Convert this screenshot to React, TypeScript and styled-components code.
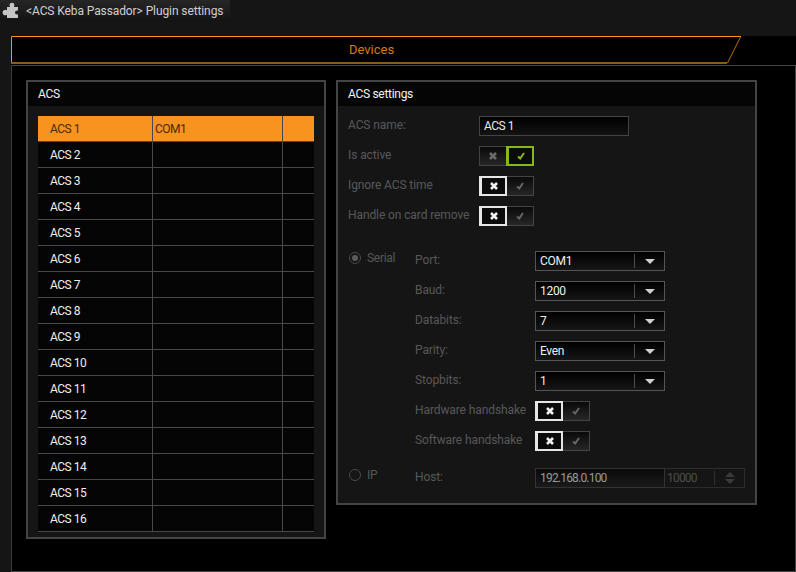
import React from 'react';
import styled, { createGlobalStyle } from 'styled-components';

const GlobalStyle = createGlobalStyle`
  html, body {
    margin: 0;
    padding: 0;
    background: #151515;
  }
  body {
    width: 796px;
    height: 572px;
    overflow: hidden;
    font-family: Roboto, "Open Sans", "Liberation Sans", sans-serif;
    font-size: 12px;
  }
`;

const Page = styled.div`
  width: 796px;
  height: 572px;
  display: flex;
  flex-direction: column;
  background: #151515;
`;

const TitleBar = styled.div`
  height: 36px;
  flex: none;
`;

const TitleTab = styled.div`
  width: 230px;
  height: 21px;
  display: flex;
  align-items: center;
  gap: 7px;
  padding-left: 2px;
  box-sizing: border-box;
  background: linear-gradient(#262626, #131313);
  color: #cfcfcf;
  letter-spacing: -0.1px;
`;

const Main = styled.div`
  flex: 1;
  margin-left: 11px;
  background: #000;
  display: flex;
  flex-direction: column;
`;

const DeviceTab = styled.div`
  position: relative;
  width: 731px;
  height: 28px;
  flex: none;
  box-sizing: border-box;
  padding: 0 10px 2px 0;
  display: flex;
  align-items: center;
  justify-content: center;
  color: #d47c14;
  font-size: 13px;
  margin-bottom: 1px;
`;

const TabShape = styled.svg`
  position: absolute;
  left: 0;
  top: 0;
`;

const Content = styled.div`
  flex: 1;
  border: 1px solid #444;
  border-left-color: #3c3c3c;
  padding: 14px;
  padding-right: 0;
  display: flex;
  gap: 10px;
  align-items: flex-start;
`;

const GroupBox = styled.section<{ $width: number }>`
  width: ${({ $width }) => $width}px;
  box-sizing: border-box;
  border: 2px solid #444;
  background: #151515;
`;

const GroupHeader = styled.h2`
  margin: 0;
  height: 24px;
  display: flex;
  align-items: center;
  padding: 0 0 1px 10px;
  box-sizing: border-box;
  background: #050505;
  color: #f2f2f2;
  font-size: 12px;
  font-weight: 400;
  letter-spacing: -0.3px;
`;

const ListBody = styled.div`
  padding: 10px 10px 5px;
`;

const Row = styled.div<{ $selected?: boolean }>`
  display: grid;
  grid-template-columns: 114px 130px 32px;
  height: 26px;
  box-sizing: border-box;
  background: ${({ $selected }) => ($selected ? '#f7931e' : '#050505')};
  color: ${({ $selected }) => ($selected ? '#4a2a08' : '#eee')};
  border-bottom: 1px solid #484848;
  letter-spacing: -0.5px;
`;

const Cell = styled.div<{ $pad: number; $line?: boolean }>`
  display: flex;
  align-items: center;
  padding-left: ${({ $pad }) => $pad}px;
  border-left: ${({ $line }) => ($line ? '1px solid #484848' : '0')};
`;

const SettingsBody = styled.div`
  padding: 10px 10px 15px;
  display: flex;
  flex-direction: column;
`;

const TopGrid = styled.div`
  display: grid;
  grid-template-columns: 131px 1fr;
  grid-auto-rows: 20px;
  row-gap: 10px;
  align-items: center;
`;

const Label = styled.label`
  color: #585858;
  white-space: nowrap;
  margin-top: -2px;
  letter-spacing: -0.1px;
`;

const NameInput = styled.div`
  width: 150px;
  height: 20px;
  box-sizing: border-box;
  border: 1px solid #444;
  background: linear-gradient(#000, #131313);
  color: #e8e8e8;
  display: flex;
  align-items: center;
  padding-left: 4px;
  letter-spacing: -0.5px;
`;

const ToggleWrap = styled.div`
  display: flex;
  width: 55px;
  height: 20px;
`;

const ToggleSide = styled.div<{ $on?: boolean; $color?: string }>`
  width: 28px;
  height: 20px;
  box-sizing: border-box;
  margin-right: -1px;
  display: flex;
  align-items: center;
  justify-content: center;
  border: ${({ $on, $color }) => ($on ? `2px solid ${$color}` : '1px solid #444')};
  border-left-width: ${({ $on }) => ($on ? '3px' : '1px')};
  background: ${({ $on }) => ($on ? '#0b0b0b' : 'linear-gradient(#0a0a0a, #262626)')};
  position: relative;
  z-index: ${({ $on }) => ($on ? 1 : 0)};
`;

const ConnectionGrid = styled.div`
  margin-top: 25px;
  display: grid;
  grid-template-columns: 67px 120px 1fr;
  grid-auto-rows: 20px;
  row-gap: 10px;
  align-items: center;
`;

const IpGrid = styled(ConnectionGrid)`
  margin-top: 17px;
`;

const RadioLabel = styled.div`
  display: flex;
  align-items: center;
  gap: 6px;
  padding-left: 1px;
  color: #585858;
  margin-top: -6px;
  letter-spacing: -0.3px;
`;

const Radio = styled.span<{ $checked?: boolean }>`
  width: 12px;
  height: 12px;
  box-sizing: border-box;
  border-radius: 50%;
  border: 1px solid #4a4a4a;
  display: flex;
  align-items: center;
  justify-content: center;
  &::after {
    content: '';
    width: 6px;
    height: 6px;
    border-radius: 50%;
    background: ${({ $checked }) => ($checked ? '#5c5c5c' : 'transparent')};
  }
`;

const Combo = styled.div`
  width: 130px;
  height: 20px;
  box-sizing: border-box;
  border: 1px solid #555;
  background: linear-gradient(#000, #161616);
  color: #eee;
  display: flex;
  align-items: center;
  padding-left: 4px;
`;

const ComboValue = styled.span`
  flex: 1;
  letter-spacing: -0.3px;
`;

const ComboDivider = styled.span`
  width: 1px;
  height: 14px;
  background: #4c4c4c;
`;

const ComboArrow = styled.span`
  width: 29px;
  display: flex;
  justify-content: center;
  &::after {
    content: '';
    border-left: 5px solid transparent;
    border-right: 5px solid transparent;
    border-top: 5px solid #d0d0d0;
  }
`;

const HostFields = styled.div`
  display: flex;
  height: 20px;
`;

const HostInput = styled.div`
  width: 130px;
  box-sizing: border-box;
  border: 1px solid #333;
  background: linear-gradient(#0a0a0a, #1a1a1a);
  color: #9a9a9a;
  display: flex;
  align-items: center;
  padding-left: 4px;
  letter-spacing: -0.8px;
`;

const PortInput = styled.div`
  width: 80px;
  box-sizing: border-box;
  border: 1px solid #2c2c2c;
  border-left: 0;
  color: #4c4c4c;
  display: flex;
  align-items: center;
  padding-left: 2px;
  letter-spacing: -0.8px;
`;

const PortValue = styled.span`
  width: 47px;
`;

const PortDivider = styled.span`
  width: 1px;
  height: 14px;
  background: #303030;
`;

const Spinner = styled.span`
  flex: 1;
  display: flex;
  flex-direction: column;
  align-items: center;
  gap: 2px;
  &::before,
  &::after {
    content: '';
    border-left: 5px solid transparent;
    border-right: 5px solid transparent;
  }
  &::before {
    border-bottom: 5px solid #3a3a3a;
  }
  &::after {
    border-top: 5px solid #3a3a3a;
  }
`;

const PuzzleIcon = () => (
  <svg width="17" height="17" viewBox="0 0 17 17">
    <path
      fill="#c4c4c4"
      d="M5 5 H8.2 C7.2 3.8 7.2 0.8 10 0.8 C12.8 0.8 12.8 3.8 11.8 5 H16 V8.6 C14.6 8 13 8.8 13 10.4 C13 12 14.6 12.8 16 12.2 V16 H5 V12.8 C3.8 13.8 0.6 13.6 0.6 10.5 C0.6 7.4 3.8 7.2 5 8.2 Z"
    />
  </svg>
);

const CrossIcon = ({ color }: { color: string }) => (
  <svg width="10" height="10" viewBox="0 0 10 10">
    <path d="M2 2 L8 8 M8 2 L2 8" stroke={color} strokeWidth="2.6" fill="none" />
  </svg>
);

const CheckIcon = ({ color }: { color: string }) => (
  <svg width="10" height="10" viewBox="0 0 10 10">
    <path d="M2 5.5 L4.2 7.5 L8 2" stroke={color} strokeWidth="2" fill="none" />
  </svg>
);

const Toggle = ({ value }: { value: boolean }) => (
  <ToggleWrap>
    <ToggleSide $on={!value} $color="#e6e6e6">
      <CrossIcon color={value ? '#6a6a6a' : '#f0f0f0'} />
    </ToggleSide>
    <ToggleSide $on={value} $color="#86b81e">
      <CheckIcon color={value ? '#86b81e' : '#666'} />
    </ToggleSide>
  </ToggleWrap>
);

const Select = ({ value }: { value: string }) => (
  <Combo>
    <ComboValue>{value}</ComboValue>
    <ComboDivider />
    <ComboArrow />
  </Combo>
);

const serialFields = [
  { label: 'Port:', value: 'COM1' },
  { label: 'Baud:', value: '1200' },
  { label: 'Databits:', value: '7' },
  { label: 'Parity:', value: 'Even' },
  { label: 'Stopbits:', value: '1' },
];

const devices = Array.from({ length: 16 }, (_, i) => `ACS ${i + 1}`);

export default function App() {
  return (
    <Page>
      <GlobalStyle />
      <TitleBar>
        <TitleTab>
          <PuzzleIcon />
          <span>&lt;ACS Keba Passador&gt; Plugin settings</span>
        </TitleTab>
      </TitleBar>
      <Main>
        <DeviceTab>
          <TabShape width="731" height="28" viewBox="0 0 731 28">
            <path d="M0.5 27 V0.5 H730" stroke="#f7931e" fill="none" />
            <path d="M729.5 1 L716.5 27" stroke="#b5700f" fill="none" />
            <path d="M0 27 H716" stroke="#8c5a1c" strokeWidth="2" fill="none" />
          </TabShape>
          Devices
        </DeviceTab>
        <Content>
          <GroupBox $width={300}>
            <GroupHeader>ACS</GroupHeader>
            <ListBody>
              {devices.map((name, i) => (
                <Row key={name} $selected={i === 0}>
                  <Cell $pad={12}>{name}</Cell>
                  <Cell $pad={2} $line>{i === 0 ? 'COM1' : ''}</Cell>
                  <Cell $pad={0} $line />
                </Row>
              ))}
            </ListBody>
          </GroupBox>
          <GroupBox $width={421}>
            <GroupHeader>ACS settings</GroupHeader>
            <SettingsBody>
              <TopGrid>
                <Label>ACS name:</Label>
                <NameInput>ACS 1</NameInput>
                <Label>Is active</Label>
                <Toggle value={true} />
                <Label>Ignore ACS time</Label>
                <Toggle value={false} />
                <Label>Handle on card remove</Label>
                <Toggle value={false} />
              </TopGrid>
              <ConnectionGrid>
                {serialFields.map((field, i) => (
                  <React.Fragment key={field.label}>
                    {i === 0 ? (
                      <RadioLabel>
                        <Radio $checked />
                        Serial
                      </RadioLabel>
                    ) : (
                      <span />
                    )}
                    <Label>{field.label}</Label>
                    <Select value={field.value} />
                  </React.Fragment>
                ))}
                <span />
                <Label>Hardware handshake</Label>
                <Toggle value={false} />
                <span />
                <Label>Software handshake</Label>
                <Toggle value={false} />
              </ConnectionGrid>
              <IpGrid>
                <RadioLabel>
                  <Radio />
                  IP
                </RadioLabel>
                <Label>Host:</Label>
                <HostFields>
                  <HostInput>192.168.0.100</HostInput>
                  <PortInput>
                    <PortValue>10000</PortValue>
                    <PortDivider />
                    <Spinner />
                  </PortInput>
                </HostFields>
              </IpGrid>
            </SettingsBody>
          </GroupBox>
        </Content>
      </Main>
    </Page>
  );
}
